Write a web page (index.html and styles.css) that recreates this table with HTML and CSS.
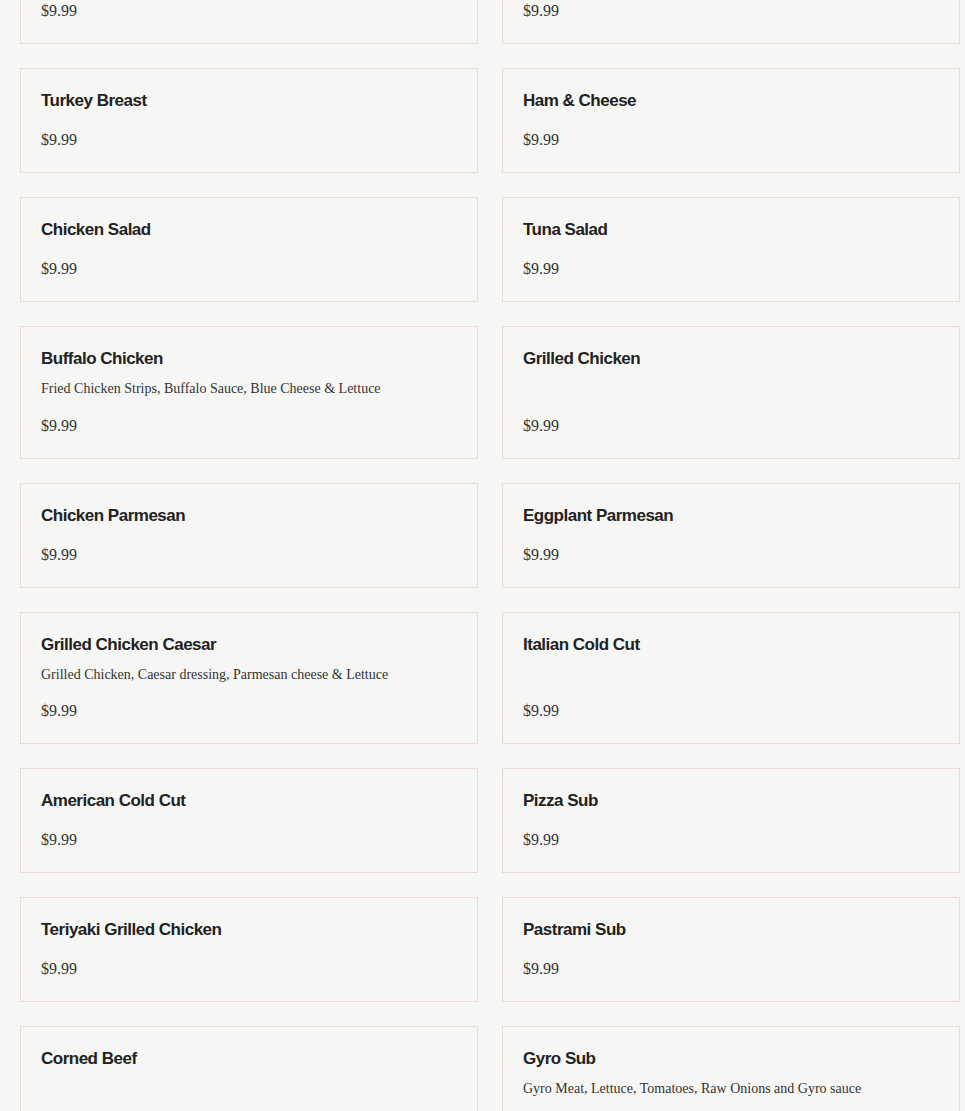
FILE: index.html
```html
<!DOCTYPE html>
<html lang="en">
<head>
    <meta charset="UTF-8">
    <meta name="viewport" content="width=device-width, initial-scale=1.0">
    <title>Subs &amp; Sandwiches</title>
    <link rel="stylesheet" href="styles.css">
</head>
<body>
    <div class="menu-grid">
        <div class="menu-item">
            <h3 class="item-name">Philly Cheese Steak</h3>
            <p class="item-price">$9.99</p>
        </div>
        <div class="menu-item">
            <h3 class="item-name">Chicken Cheese Steak</h3>
            <p class="item-price">$9.99</p>
        </div>

        <div class="menu-item">
            <h3 class="item-name">Turkey Breast</h3>
            <p class="item-price">$9.99</p>
        </div>
        <div class="menu-item">
            <h3 class="item-name">Ham &amp; Cheese</h3>
            <p class="item-price">$9.99</p>
        </div>

        <div class="menu-item">
            <h3 class="item-name">Chicken Salad</h3>
            <p class="item-price">$9.99</p>
        </div>
        <div class="menu-item">
            <h3 class="item-name">Tuna Salad</h3>
            <p class="item-price">$9.99</p>
        </div>

        <div class="menu-item">
            <h3 class="item-name">Buffalo Chicken</h3>
            <p class="item-desc">Fried Chicken Strips, Buffalo Sauce, Blue Cheese &amp; Lettuce</p>
            <p class="item-price">$9.99</p>
        </div>
        <div class="menu-item">
            <h3 class="item-name">Grilled Chicken</h3>
            <p class="item-price">$9.99</p>
        </div>

        <div class="menu-item">
            <h3 class="item-name">Chicken Parmesan</h3>
            <p class="item-price">$9.99</p>
        </div>
        <div class="menu-item">
            <h3 class="item-name">Eggplant Parmesan</h3>
            <p class="item-price">$9.99</p>
        </div>

        <div class="menu-item">
            <h3 class="item-name">Grilled Chicken Caesar</h3>
            <p class="item-desc">Grilled Chicken, Caesar dressing, Parmesan cheese &amp; Lettuce</p>
            <p class="item-price">$9.99</p>
        </div>
        <div class="menu-item">
            <h3 class="item-name">Italian Cold Cut</h3>
            <p class="item-price">$9.99</p>
        </div>

        <div class="menu-item">
            <h3 class="item-name">American Cold Cut</h3>
            <p class="item-price">$9.99</p>
        </div>
        <div class="menu-item">
            <h3 class="item-name">Pizza Sub</h3>
            <p class="item-price">$9.99</p>
        </div>

        <div class="menu-item">
            <h3 class="item-name">Teriyaki Grilled Chicken</h3>
            <p class="item-price">$9.99</p>
        </div>
        <div class="menu-item">
            <h3 class="item-name">Pastrami Sub</h3>
            <p class="item-price">$9.99</p>
        </div>

        <div class="menu-item">
            <h3 class="item-name">Corned Beef</h3>
            <p class="item-price">$9.99</p>
        </div>
        <div class="menu-item">
            <h3 class="item-name">Gyro Sub</h3>
            <p class="item-desc">Gyro Meat, Lettuce, Tomatoes, Raw Onions and Gyro sauce</p>
            <p class="item-price">$9.99</p>
        </div>
    </div>
</body>
</html>
```

FILE: styles.css
```css
body {
    margin: 0;
    padding: 0;
    background-color: #f6f7f5;
    font-family: 'Liberation Serif', 'Times New Roman', serif;
    color: #333;
}

.menu-grid {
    display: grid;
    grid-template-columns: 1fr 1fr;
    gap: 24px;
    padding: 0 5px 0 20px;
    margin-top: -61px;
}

.menu-item {
    display: flex;
    flex-direction: column;
    padding: 21px 20px 19px;
    background-color: #f6f7f5;
    border: 1px solid #ebd9d9;
}

.item-name {
    margin: 0;
    font-family: 'Liberation Sans', Arial, sans-serif;
    font-size: 17px;
    font-weight: bold;
    letter-spacing: -0.5px;
    line-height: 22px;
    color: #222;
}

.item-desc {
    margin: 10px 0 0;
    font-size: 14px;
    line-height: 17.5px;
    color: #333;
}

.item-price {
    margin: auto 0 0;
    padding-top: 15px;
    font-size: 16px;
    line-height: 26px;
    color: #333;
}
```
